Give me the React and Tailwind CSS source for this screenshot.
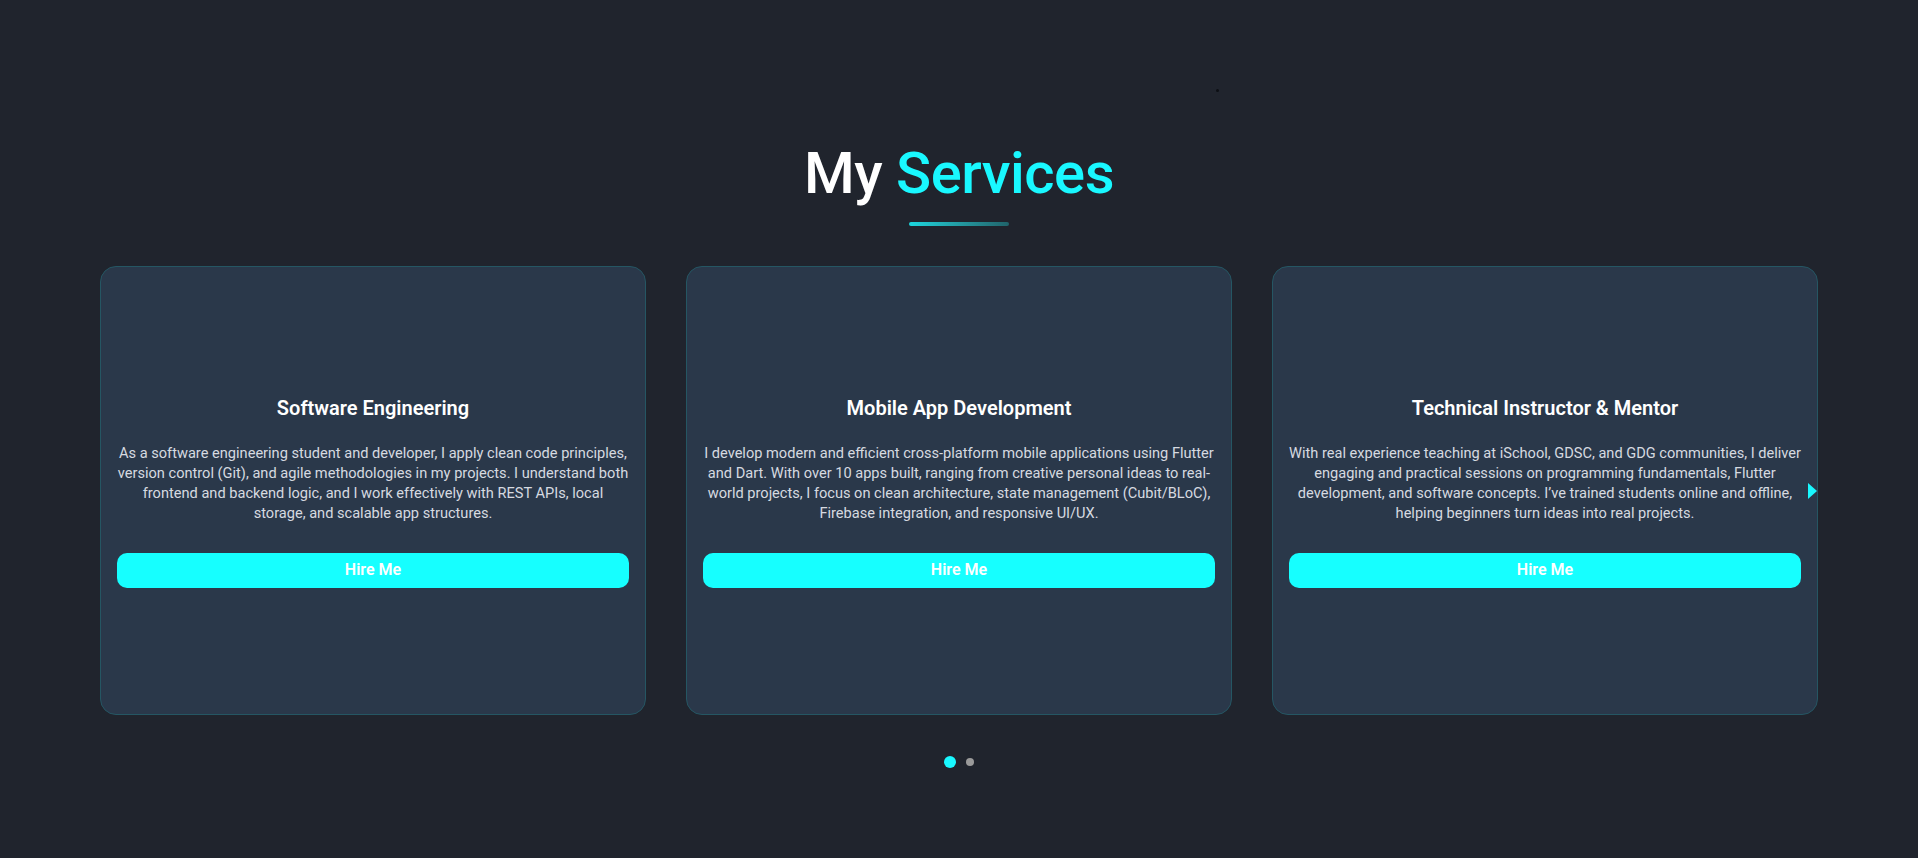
import React from 'react';

const services = [
  {
    title: 'Software Engineering',
    desc: 'As a software engineering student and developer, I apply clean code principles, version control (Git), and agile methodologies in my projects. I understand both frontend and backend logic, and I work effectively with REST APIs, local storage, and scalable app structures.',
  },
  {
    title: 'Mobile App Development',
    desc: 'I develop modern and efficient cross-platform mobile applications using Flutter and Dart. With over 10 apps built, ranging from creative personal ideas to real-world projects, I focus on clean architecture, state management (Cubit/BLoC), Firebase integration, and responsive UI/UX.',
  },
  {
    title: 'Technical Instructor & Mentor',
    desc: 'With real experience teaching at iSchool, GDSC, and GDG communities, I deliver engaging and practical sessions on programming fundamentals, Flutter development, and software concepts. I\u2019ve trained students online and offline, helping beginners turn ideas into real projects.',
  },
];

export default function App() {
  return (
    <div
      className="relative min-h-[858px] bg-[#20242d] text-white"
      style={{ fontFamily: 'Roboto, "Noto Sans", sans-serif' }}
    >
      {/* stray particle */}
      <span className="absolute left-[1216px] top-[89px] h-[3px] w-[3px] rounded-full bg-[#0d0f14]" />

      <section className="flex flex-col items-center pt-[144px]">
        <h2 className="text-[58px] font-medium leading-none tracking-[-0.5px]">
          My <span className="text-[#19f8ff]">Services</span>
        </h2>
        <div className="mt-5 h-1 w-[100px] rounded-full bg-gradient-to-r from-[#1ad6de] to-[#20646b]" />

        {/* Carousel */}
        <div className="relative mt-10 w-full px-[100px]">
          <div className="grid grid-cols-3 gap-10">
            {services.map((s) => (
              <ServiceCard key={s.title} title={s.title} desc={s.desc} />
            ))}
          </div>
          <span className="absolute right-[101px] top-1/2 h-0 w-0 -translate-y-1/2 border-y-[8px] border-l-[9px] border-y-transparent border-l-[#19f8ff]" />
        </div>

        {/* Pagination */}
        <div className="mt-[41px] flex items-center gap-[10px]">
          <span className="h-3 w-3 rounded-full bg-[#19f8ff]" />
          <span className="h-2 w-2 rounded-full bg-[#9a9a9a]" />
        </div>
      </section>
    </div>
  );
}

function ServiceCard({ title, desc }) {
  return (
    <div className="flex h-[449px] flex-col items-center justify-center rounded-2xl border border-[#255663] bg-[#2a384a] px-4 text-center">
      <h3 className="text-xl font-semibold leading-7 text-white">{title}</h3>
      <p className="mt-[21px] text-[14.6px] leading-5 text-[#d6dae0]">{desc}</p>
      <button className="mt-[30px] flex h-[35px] w-full items-center justify-center rounded-[10px] bg-[#16ffff] text-base font-semibold text-white">
        Hire Me
      </button>
    </div>
  );
}
